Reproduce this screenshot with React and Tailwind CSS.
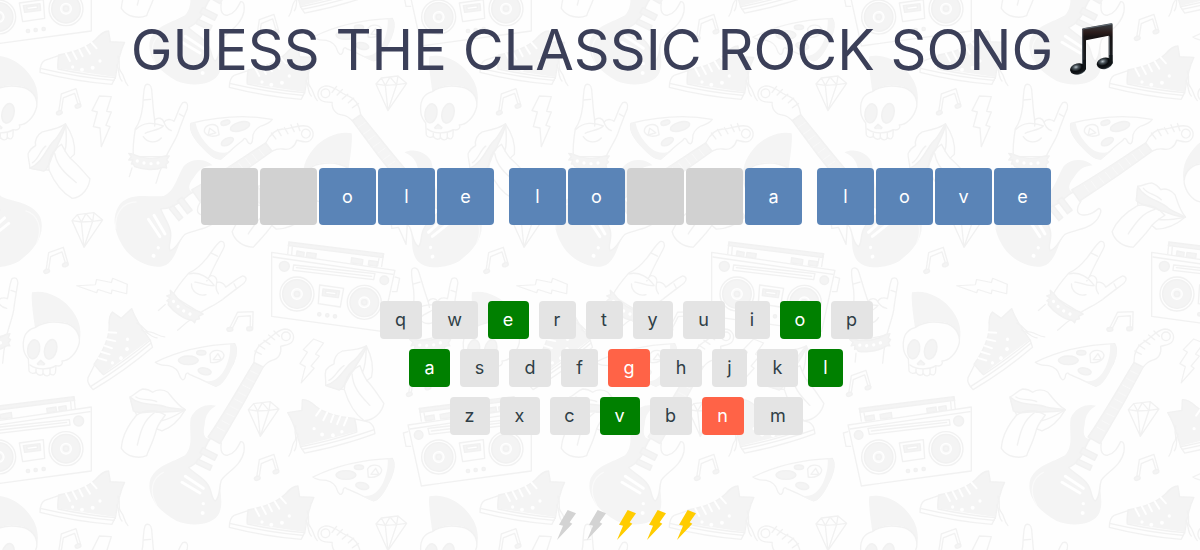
const GREY = "#f4f4f4";
const LINE = "#f1f1f1";

function Skull() {
  return (
    <g>
      <path fill={GREY} stroke="none" d="M345 158 C338 110 333 70 336 52 C372 44 420 62 450 98 C476 128 486 160 480 196 C474 164 458 146 432 142 C404 136 372 138 345 158Z" />
      <path d="M345 158 C320 165 308 185 310 215 C310 235 318 242 325 252 L327 288 C332 298 344 296 348 292 C354 304 366 302 370 296 C376 306 388 304 390 296 C400 304 408 298 407 286 L408 272 C424 276 430 266 426 258 C446 258 470 236 478 204 C482 176 462 148 432 144 C400 138 368 142 345 158Z" />
      <ellipse fill={GREY} cx="341" cy="223" rx="18" ry="29" transform="rotate(10 341 223)" />
      <ellipse fill={GREY} cx="392" cy="223" rx="18" ry="30" transform="rotate(14 392 223)" />
      <path fill={GREY} d="M362 256 L374 266 L368 275 L358 275 L352 266Z" />
      <path d="M330 270 C350 286 390 284 408 272 M348 282 V294 M369 284 V298 M390 281 V298" />
    </g>
  );
}

function Sneaker() {
  return (
    <g>
      <path fill={GREY} stroke="none" d="M416 660 C460 652 500 640 528 612 C540 598 550 588 566 588 L571 620 L614 622 C600 650 592 690 586 726 L410 700Z" />
      <path fill="none" d="M416 660 C460 652 500 640 528 612 C540 598 550 588 566 588 L571 620 L614 622 C600 650 592 690 586 730" />
      <path d="M416 662 L374 676 C364 682 360 690 360 712 C430 730 500 742 576 748 L586 728 C540 724 470 714 414 702 C412 690 414 676 416 662Z" />
      <path fill="none" d="M361 700 C430 716 510 730 582 736" />
      <path fill="none" d="M594 664 C604 690 590 700 604 712 C614 724 612 740 624 752 M590 690 C600 710 594 726 606 738" />
      <path stroke="#fff" strokeWidth="6" d="M438 656 L450 678 M458 650 L470 672 M478 644 L488 664 M496 634 L510 656 M514 622 L530 640" />
      <g fill="#fff" stroke="none"><circle cx="486" cy="704" r="6" /><circle cx="518" cy="698" r="6" /><circle cx="540" cy="678" r="5" /><circle cx="458" cy="696" r="5" /></g>
    </g>
  );
}

function Note() {
  return (
    <g>
      <path d="M0 70 L8 16 L52 0 L66 48 L59 50 L48 14 L14 28 L7 72Z" />
      <ellipse fill={GREY} cx="2" cy="72" rx="9" ry="6" transform="rotate(-20 2 72)" />
      <ellipse fill={GREY} cx="58" cy="52" rx="9" ry="6" transform="rotate(-20 58 52)" />
    </g>
  );
}

function Diamond() {
  return (
    <path fill="none" d="M0 24 L16 6 L66 0 L92 22 L36 104Z M0 24 L28 28 L62 26 L92 22 M28 28 L36 104 L62 26 M16 6 L28 28 L42 3 L62 26 L66 0" />
  );
}

function Bolt() {
  return <path d="M22 0 L58 2 L44 46 L58 48 L42 88 L54 92 L28 152 L24 96 L4 92 L16 48 L0 44Z" />;
}

function Pizza() {
  return (
    <g>
      <path d="M466 262 C520 235 600 210 704 206 C716 226 706 260 688 286 C676 312 664 330 648 334 C620 322 590 306 568 298 C562 290 556 296 556 306 C550 322 542 312 538 300 C534 284 522 276 506 272 C494 270 480 274 466 262Z" />
      <path fill={GREY} stroke="none" d="M690 206 C720 202 714 244 692 286 C676 316 662 336 644 334 L610 318 C650 326 670 296 680 270 C690 246 692 222 690 206Z" />
      <ellipse fill={GREY} cx="565" cy="256" rx="30" ry="13" />
      <ellipse fill={GREY} cx="614" cy="289" rx="20" ry="10" transform="rotate(12 614 289)" />
      <ellipse fill={GREY} cx="604" cy="233" rx="14" ry="7" />
      <path fill="none" d="M630 238 C638 222 666 222 672 240 C672 256 650 266 632 262Z M640 254 L654 236 L664 254Z" />
    </g>
  );
}

function Lips() {
  return (
    <g>
      <path d="M390 366 C406 358 414 346 428 342 C440 342 450 346 458 352 C470 342 490 342 504 352 C520 372 534 392 556 404 C540 432 514 458 486 468 L470 462 C460 500 448 520 440 542 C416 552 380 546 364 520 C366 484 388 446 410 420 C400 400 392 384 390 366Z" />
      <path fill={GREY} d="M390 366 C420 394 470 384 498 396 C516 402 536 400 556 404 C530 414 500 408 474 412 C450 406 420 420 400 408Z" />
      <path fill="none" d="M410 420 C440 402 472 406 496 420 C484 436 474 450 470 462 M462 414 C426 440 420 480 412 510 M556 404 C530 420 508 434 482 438" />
      <path fill="none" d="M408 366 C426 378 450 370 470 380" />
    </g>
  );
}

function RockHand() {
  return (
    <g>
      <path d="M400 470 C398 440 402 410 406 386 C418 370 424 350 428 320 C430 300 430 266 436 256 C444 248 454 256 455 268 C458 300 460 336 464 360 C474 350 488 354 492 366 C504 352 520 362 522 364 C532 344 536 324 548 308 C560 304 566 312 562 326 C552 352 542 376 534 400 C524 426 512 440 498 470Z" />
      <path fill="none" d="M408 388 C430 366 462 366 490 378 C476 392 446 392 436 400 M464 360 V378 M492 366 C496 380 504 388 514 392 M430 410 C442 430 470 430 484 414 M430 300 L452 298 M538 342 L552 350" />
      <path fill={GREY} d="M398 462 L386 460 L394 470 L386 480 L398 480 L394 492 L400 492 L404 500 C430 510 466 512 490 502 L500 504 L498 494 L506 486 L500 480 L508 468 L496 468 C460 480 424 474 398 462Z" />
      <g fill="#fff" stroke="none"><circle cx="412" cy="483" r="5" /><circle cx="432" cy="489" r="5" /><circle cx="453" cy="491" r="5" /><circle cx="474" cy="489" r="5" /></g>
      <path fill="none" d="M396 504 L388 530 M484 504 C476 520 474 534 468 550" />
    </g>
  );
}

function Boombox() {
  return (
    <g>
      <path fill={GREY} d="M178 400 L462 365 L464 376 L180 412Z" />
      <path fill="none" d="M178 400 L184 438 M462 365 L466 404 M192 414 L196 436 M452 380 L454 404" />
      <path fill={GREY} d="M196 424 L222 420 L224 434 L198 438Z M240 418 L274 412 L276 428 L242 432Z M380 400 L408 396 L410 410 L382 414Z M416 396 L438 392 L440 406 L418 410Z" />
      <path d="M144 450 L514 396 L514 588 L184 633Z" />
      <path fill="none" d="M150 462 L510 410 M144 470 L130 474 L138 514 L152 514 M204 460 L448 434 L450 450 L208 478Z M214 468 L440 442" />
      <circle fill={GREY} cx="176" cy="480" r="13" />
      <circle fill={GREY} cx="476" cy="438" r="15" />
      <circle cx="236" cy="546" r="51" /><circle fill={GREY} cx="236" cy="546" r="43" /><circle cx="236" cy="546" r="16" fill="#fafafa" stroke="#fff" /><circle fill={GREY} cx="236" cy="546" r="8" />
      <circle cx="438" cy="521" r="51" /><circle fill={GREY} cx="438" cy="521" r="43" /><circle cx="438" cy="521" r="16" fill="#fafafa" stroke="#fff" /><circle fill={GREY} cx="438" cy="521" r="8" />
      <path d="M298 504 L370 494 L374 550 L308 560Z" />
      <path fill={GREY} d="M310 512 L360 506 L362 526 L314 532Z" />
      <path fill="#fff" d="M320 516 L352 512 L352 520 L322 524Z" />
      <g fill={GREY}><circle cx="324" cy="588" r="5" /><circle cx="347" cy="585" r="5" /><circle cx="371" cy="582" r="5" /></g>
    </g>
  );
}

function Guitar() {
  return (
    <g>
      <path fill={GREY} stroke="none" d="M648 392 C620 384 584 398 572 430 C566 470 582 510 556 540 C520 562 466 570 450 616 C440 662 470 706 530 738 C574 756 640 752 658 714 C672 680 656 650 664 616 C676 594 724 574 732 530 C734 512 730 498 722 500 C712 520 704 534 684 540 C664 542 660 520 662 500 L640 486 C616 500 606 480 614 450 C616 420 626 406 648 392Z" />
      <path d="M566 578 C590 566 604 550 616 518 C624 500 630 486 640 486 L664 504 C660 530 668 544 684 540 C704 534 712 520 722 500 C732 498 734 512 732 530 C724 574 676 594 664 616 C656 640 662 664 646 678 C632 670 638 646 620 624 C606 606 584 596 566 578Z" />
      <path fill={GREY} d="M762 262 L790 276 C750 352 706 430 660 506 L624 486 C676 410 718 334 762 262Z" />
      <path stroke="#fafafa" strokeWidth="2" fill="none" d="M752 288 L774 298 M740 310 L762 321 M728 330 L750 341 M716 352 L738 363 M704 372 L726 383 M692 394 L714 405 M680 415 L702 425 M666 437 L688 449 M652 457 L674 469" />
      <path d="M762 262 C762 236 768 214 790 202 C812 192 826 166 854 162 C876 162 886 182 878 198 C870 212 852 210 842 214 C846 234 836 252 816 256 C802 260 796 268 790 276Z" />
      <path d="M764 228 L784 238 M776 210 L794 222 M792 196 L810 208 M806 180 L824 194 M822 168 L838 184" />
      <circle cx="858" cy="184" r="13" />
      <path fill={GREY} d="M608 518 L652 540 L644 556 L600 534Z M594 552 L636 572 L630 586 L588 566Z" />
      <path stroke="#fff" strokeWidth="9" d="M556 604 L610 640 M546 622 L600 654" />
      <path fill="none" stroke="#fafafa" d="M470 690 C446 650 456 608 490 592" />
      <g fill="#fff" stroke="none"><circle cx="610" cy="686" r="5" /><circle cx="608" cy="714" r="6" /></g>
    </g>
  );
}

function DoodleTile() {
  return (
    <g fill="#fefefe" stroke={LINE} strokeWidth="4" strokeLinejoin="round" strokeLinecap="round">
      <g transform="scale(.3333)">
        <g transform="translate(1335 690) rotate(-8) scale(-1 1) translate(-560 -640)"><Guitar /></g>
        <g transform="translate(1391 348) scale(-1 1)"><Skull /></g>
        <g transform="translate(450 680) rotate(26) translate(-560 -640)"><Guitar /></g>
        <g transform="translate(176 266)"><Note /></g>
        <g transform="translate(138 742)"><Note /></g>
        <g transform="translate(276 288)"><Bolt /></g>
        <g transform="translate(1140 600) rotate(-20)"><Bolt /></g>
        <RockHand />
        <g transform="translate(550 925) rotate(32) translate(-448 -485)"><RockHand /></g>
        <g transform="translate(1295 1030) rotate(-12) translate(-448 -485)"><RockHand /></g>
        <g transform="translate(700 400) rotate(-16) scale(-1 1) translate(-590 -270)"><Pizza /></g>
        <g transform="translate(143 438) rotate(-64) translate(-473 -385)"><Lips /></g>
        <g transform="translate(845 605) rotate(20) translate(-473 -385)"><Lips /></g>
        <g transform="translate(1329 361) scale(-1 1)"><Boombox /></g>
        <g transform="translate(216 638)"><Diamond /></g>
        <g transform="translate(1128 228)"><Diamond /></g>
      </g>
      <g transform="translate(360 275) scale(.3333)">
        <Skull />
        <g transform="translate(-128 612)"><Skull /></g>
        <Boombox />
        <Sneaker />
        <g transform="translate(568 45)"><Sneaker /></g>
        <g transform="translate(146 286)"><Note /></g>
        <g transform="translate(622 10) rotate(90) scale(.8 1)"><Bolt /></g>
      </g>
      <g transform="translate(0 275) scale(.3333)">
        <g transform="translate(372 284) rotate(-45) translate(-468 -735)"><Sneaker /></g>
        <Pizza />
        <g transform="translate(473 344)"><Pizza /></g>
        <Lips />
        <g transform="translate(1038 272) rotate(-57) translate(-473 -385)"><Lips /></g>
        <Guitar />
        <g transform="translate(1020 510) rotate(-6) scale(-1 1) translate(-468 -735)"><Sneaker /></g>
        <g transform="translate(745 380)"><Diamond /></g>
        <g transform="translate(770 538)"><Note /></g>
        <g transform="translate(710 94) rotate(18)"><Note /></g>
        <g transform="translate(922 186) rotate(18) scale(.9)"><Bolt /></g>
      </g>
    </g>
  );
}

function Backdrop() {
  return (
    <svg className="absolute inset-0 -z-10 h-full w-full" aria-hidden="true">
      <defs>
        <g id="doodles"><DoodleTile /></g>
        <pattern id="wallpaper" width="440" height="440" patternUnits="userSpaceOnUse">
          {[-440, 0, 440].map((y) => [-440, 0, 440].map((x) => <use key={`${x},${y}`} href="#doodles" x={x} y={y} />))}
        </pattern>
      </defs>
      <rect width="100%" height="100%" fill="url(#wallpaper)" />
    </svg>
  );
}

function MusicNotes() {
  return (
    <svg className="h-[54px] w-[44px] shrink-0" viewBox="0 0 132 162" aria-hidden="true">
      <defs>
        <linearGradient id="beam" x1="0" y1="0" x2="0" y2="1">
          <stop offset="0" stopColor="#3a4248" /><stop offset=".2" stopColor="#2c1d1c" /><stop offset=".3" stopColor="#171314" /><stop offset="1" stopColor="#1b2126" />
        </linearGradient>
        <radialGradient id="head" cx=".4" cy=".3" r=".75">
          <stop offset="0" stopColor="#b9c3ca" /><stop offset=".22" stopColor="#4b555c" /><stop offset=".5" stopColor="#090c0f" /><stop offset=".8" stopColor="#15191d" /><stop offset="1" stopColor="#66737b" />
        </radialGradient>
      </defs>
      <path fill="url(#beam)" d="M39 20 Q39 17 42 16 L126 1 Q131 0 131 5 V122 H119 V38 L51 52 V136 H39Z" />
      <path fill="none" stroke="#7b8994" strokeWidth="2" d="M41 20 V128 M121 40 V118 M41 18 L128 3" />
      <ellipse cx="27" cy="138" rx="24" ry="17" transform="rotate(-12 27 138)" fill="url(#head)" />
      <ellipse cx="107" cy="121" rx="24" ry="17" transform="rotate(-12 107 121)" fill="url(#head)" />
      <path fill="#111518" d="M42 110 H51 V138 L44 146Z M121 96 H130 V120 L123 130Z" />
    </svg>
  );
}

const words = ["__ole", "lo__a", "love"];
const rows = ["qwertyuiop", "asdfghjkl", "zxcvbnm"];
const hits = "eoalv";
const misses = "gn";

const keyWidth = {
  i: "w-[35px]", j: "w-[35px]", l: "w-[35px]",
  r: "w-[37px]", t: "w-[37px]", f: "w-[37px]",
  s: "w-[39px]",
  y: "w-[40px]", z: "w-[40px]", x: "w-[40px]", c: "w-[40px]", v: "w-[40px]",
  e: "w-[41px]", o: "w-[41px]", a: "w-[41px]", k: "w-[41px]",
  q: "w-[42px]", u: "w-[42px]", p: "w-[42px]", d: "w-[42px]", g: "w-[42px]", h: "w-[42px]", b: "w-[42px]", n: "w-[42px]",
  w: "w-[46px]", m: "w-[49px]",
};

function keyColour(letter) {
  if (hits.includes(letter)) return "bg-[#008000] text-white";
  if (misses.includes(letter)) return "bg-[#ff6347] text-white";
  return "bg-[#e4e4e4] text-[#2f3e46]";
}

export default function App() {
  return (
    <main className="relative isolate min-h-screen overflow-hidden bg-[#fefefe] pl-[52px] font-['Inter',sans-serif] text-lg leading-6">
      <Backdrop />
      <div className="flex flex-col items-center pt-5">
        <h1 className="flex items-center gap-4 whitespace-nowrap pr-2 text-[56px] leading-[60px] text-[#3b3f58]">
          GUESS THE CLASSIC ROCK SONG
          <MusicNotes />
        </h1>

        <div className="mt-[88px] flex gap-[15px]">
          {words.map((word) => (
            <div key={word} className="flex gap-0.5">
              {[...word].map((letter, i) => (
                <span
                  key={i}
                  className={`flex size-[57px] items-center justify-center rounded text-white ${letter === "_" ? "bg-[#d1d1d1]" : "bg-[#5a84b7]"}`}
                >
                  {letter === "_" ? "" : letter}
                </span>
              ))}
            </div>
          ))}
        </div>

        <div className="mt-[76px] flex flex-col items-center gap-2.5">
          {rows.map((row) => (
            <div key={row} className="flex gap-2.5">
              {[...row].map((letter) => (
                <button key={letter} type="button" className={`h-[38px] rounded text-center ${keyWidth[letter]} ${keyColour(letter)}`}>
                  {letter}
                </button>
              ))}
            </div>
          ))}
        </div>

        <div className="mt-[75px] flex gap-[11px]" role="img" aria-label="3 of 5 tries left">
          {[0, 1, 2, 3, 4].map((n) => (
            <svg key={n} className={`h-[30px] w-[19px] ${n < 2 ? "fill-[#d3d3d3]" : "fill-[#ffcc00]"}`} viewBox="0 0 57 90" aria-hidden="true">
              <path d="M32 0 L57 10 L38 37 L46 41 L0 90 L18 47 L6 44Z" />
            </svg>
          ))}
        </div>
      </div>
    </main>
  );
}
